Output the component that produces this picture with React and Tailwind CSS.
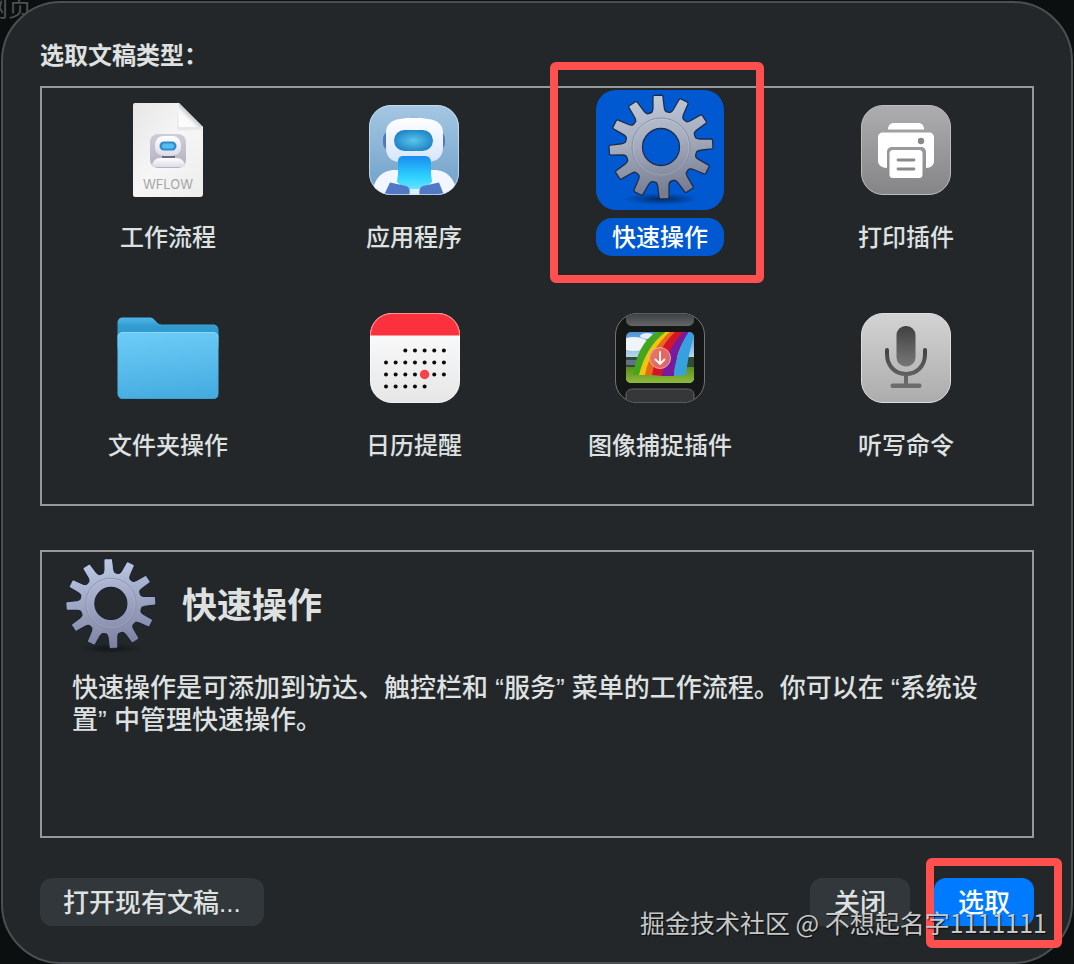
import { useState } from "react";

const TEETH = [0, 30, 60, 90, 120, 150, 180, 210, 240, 270, 300, 330];

function rad(deg) {
  return (deg * Math.PI) / 180;
}

function gearPath(cx, cy) {
  const point = (r, deg) =>
    `${(cx + r * Math.sin(rad(deg))).toFixed(2)} ${(cy - r * Math.cos(rad(deg))).toFixed(2)}`;

  const outline = TEETH.map((t, i) => {
    const a = t - 3.5;
    const start = `${i === 0 ? "M" : "L"}${point(36, a - 11)}`;
    return `${start} Q${point(37.5, a - 8.8)} ${point(39.5, a - 8.2)} L${point(50.5, a - 5.7)} Q${point(52, a - 5.4)} ${point(52, a - 4)} L${point(52, a + 4)} Q${point(52, a + 5.4)} ${point(50.5, a + 5.7)} L${point(39.5, a + 8.2)} Q${point(37.5, a + 8.8)} ${point(36, a + 11)} Q${point(35.2, a + 15)} ${point(36, a + 19)}`;
  }).join(" ");

  return `${outline} Z M${cx - 18.5} ${cy} a18.5 18.5 0 1 0 37 0 a18.5 18.5 0 1 0 -37 0 Z`;
}

const GEAR = gearPath(61, 57);

function GearIcon({ id, className, light }) {
  return (
    <svg viewBox="0 0 120 120" className={className} aria-hidden="true">
      <defs>
        <linearGradient id={id} x1="0" y1="0" x2="0.15" y2="1">
          <stop offset="0" stopColor={light ? "#c3cfea" : "#c4cddc"} />
          <stop offset="0.5" stopColor={light ? "#a0a9c6" : "#a5adbf"} />
          <stop offset="1" stopColor={light ? "#8084a2" : "#777c91"} />
        </linearGradient>
        <radialGradient id={`${id}-shadow`}>
          <stop offset="0" stopColor="#05080f" stopOpacity="0.55" />
          <stop offset="1" stopColor="#05080f" stopOpacity="0" />
        </radialGradient>
      </defs>
      <ellipse cx="61" cy="109" rx="38" ry="6" fill={`url(#${id}-shadow)`} />
      <path
        d={GEAR}
        fill={`url(#${id})`}
        fillRule="evenodd"
        stroke={light ? "#1b2436" : "#1d2c4c"}
        strokeWidth="1.3"
        strokeLinejoin="round"
      />
      <circle cx="61" cy="57" r="29" fill="none" stroke="#848da2" strokeWidth="0.9" />
      <circle cx="61" cy="57" r="28" fill="none" stroke="#ffffff" strokeOpacity="0.2" strokeWidth="0.8" />
    </svg>
  );
}

function WorkflowIcon() {
  return (
    <svg viewBox="0 0 128 120" className="h-full w-full" aria-hidden="true">
      <defs>
        <linearGradient id="paper" x1="0" y1="0" x2="1" y2="1">
          <stop offset="0" stopColor="#e6e6e6" />
          <stop offset="0.5" stopColor="#f6f6f6" />
          <stop offset="1" stopColor="#ededed" />
        </linearGradient>
        <linearGradient id="fold" x1="0" y1="1" x2="1" y2="0">
          <stop offset="0" stopColor="#ffffff" />
          <stop offset="0.35" stopColor="#fafafa" />
          <stop offset="0.52" stopColor="#c4c4c4" />
        </linearGradient>
        <linearGradient id="bust" x1="0" y1="0" x2="0" y2="1">
          <stop offset="0" stopColor="#c5c3d2" />
          <stop offset="1" stopColor="#a5a2b2" />
        </linearGradient>
        <linearGradient id="fade" x1="0" y1="0" x2="0" y2="1">
          <stop offset="0" stopColor="#ffffff" />
          <stop offset="1" stopColor="#dcdbe6" />
        </linearGradient>
      </defs>
      <path d="M31 13h44l24 24v67a3 3 0 0 1-3 3H31a2 2 0 0 1-2-2V15a2 2 0 0 1 2-2z" fill="url(#paper)" />
      <path d="M74 19l-1 19c0 2 1 2.500 3 2.500l22-1-1-4-22-2z" fill="#000000" opacity="0.05" />
      <path d="M75 13l24 24H77a2.500 2.500 0 0 1-2.500-2.500z" fill="url(#fold)" />
      <rect x="46" y="44" width="36" height="34" rx="8" fill="url(#bust)" opacity="0.8" />
      <rect x="58" y="62" width="13" height="8" fill="#6c6980" />
      <path d="M48 77c0-6 4-9 9-9h15c5 0 9 3 9 9z" fill="url(#fade)" />
      <rect x="51" y="46" width="26" height="20" rx="8.500" fill="url(#fade)" />
      <rect x="55.500" y="51.500" width="17" height="9" rx="4.500" fill="#2f8dc9" />
      <rect x="58" y="53.500" width="12" height="5" rx="2.500" fill="#57bdf0" />
      <text x="64" y="99" textAnchor="middle" fontSize="13" fill="#a5a5a5" className="font-['Inter']">
        WFLOW
      </text>
    </svg>
  );
}

function AppIcon() {
  return (
    <svg viewBox="0 0 128 120" className="h-full w-full" aria-hidden="true">
      <defs>
        <linearGradient id="sky" x1="0" y1="0" x2="0" y2="1">
          <stop offset="0" stopColor="#a4c7e3" />
          <stop offset="1" stopColor="#6f9fc8" />
        </linearGradient>
        <linearGradient id="head" x1="0" y1="0" x2="0" y2="1">
          <stop offset="0" stopColor="#ffffff" />
          <stop offset="1" stopColor="#d7e5fb" />
        </linearGradient>
        <linearGradient id="chest" x1="0" y1="0" x2="0" y2="1">
          <stop offset="0" stopColor="#1a8df0" />
          <stop offset="0.6" stopColor="#2ed3ff" />
          <stop offset="1" stopColor="#7be6ff" />
        </linearGradient>
        <radialGradient id="visor">
          <stop offset="0" stopColor="#5bc6ec" />
          <stop offset="1" stopColor="#2288c9" />
        </radialGradient>
        <clipPath id="app-clip">
          <rect x="19" y="15" width="90" height="90" rx="22" />
        </clipPath>
      </defs>
      <g clipPath="url(#app-clip)">
        <rect x="19" y="15" width="90" height="90" fill="url(#sky)" />
        <path d="M22 106c1-16 9-26 23-26h39c14 0 22 10 23 26z" fill="#f1f6ff" />
        <rect x="33" y="41" width="62" height="20" rx="8" fill="#4c77c5" />
        <ellipse cx="64" cy="31" rx="7" ry="4" fill="#4c77c5" />
        <path d="M50 29q14-3 28 0c10 1 15 6 15 14v15c0 9-7 14-15 14H50c-8 0-14-5-14-14V43c0-8 5-13 14-14z" fill="url(#head)" />
        <rect x="44" y="40" width="39" height="21" rx="10.500" fill="url(#visor)" />
        <path d="M53 66h22c4 0 6 3 6 6v11c0 4 1 6 1 9l-8 7-4 3H59l-4-3-8-7c0-3 1-5 1-9V72c0-3 1-6 5-6z" fill="url(#chest)" />
        <path d="M60 99h10v7H60z" fill="#d7efff" />
        <path d="M40 92.500l16 3.500c3 1 4 3 3.500 9H34z" fill="#5278c5" />
        <path d="M89 92.500l-16 3.500c-3 1-4 3-3.500 9H94z" fill="#5278c5" />
      </g>
      <rect x="19.500" y="15.500" width="89" height="89" rx="21.500" fill="none" stroke="#cfe1f2" strokeOpacity="0.75" />
    </svg>
  );
}

function PrinterIcon() {
  return (
    <svg viewBox="0 0 128 120" className="h-full w-full" aria-hidden="true">
      <defs>
        <linearGradient id="printer-bg" x1="0" y1="0" x2="0" y2="1">
          <stop offset="0" stopColor="#adadb0" />
          <stop offset="1" stopColor="#858588" />
        </linearGradient>
      </defs>
      <rect x="19.500" y="15.500" width="89" height="89" rx="21.500" fill="url(#printer-bg)" stroke="#bcbcbe" />
      <path d="M46 39.500c0-4 2-6.500 6-6.500h24c4 0 6 2.500 6 6.500z" fill="#fff" />
      <path d="M41 42.500h46c3 0 5 2 5 5V71c0 4-3 7-8 7V62c0-3-2-5-5-5H50c-3 0-5 2-5 5v16c-5 0-9-3-9-7V47.500c0-3 2-5 5-5z" fill="#fff" />
      <circle cx="79" cy="51" r="3.200" fill="#88888b" />
      <rect x="47.500" y="60" width="33" height="28" rx="3.500" fill="#fff" />
      <path d="M56 70h16M56 79h16" stroke="#8a8a8d" strokeWidth="2.800" strokeLinecap="round" />
    </svg>
  );
}

function FolderIcon() {
  return (
    <svg viewBox="0 0 128 120" className="h-full w-full" aria-hidden="true">
      <defs>
        <linearGradient id="folder-back" x1="0" y1="0" x2="0" y2="1">
          <stop offset="0" stopColor="#4eb6e8" />
          <stop offset="0.3" stopColor="#319bd0" />
        </linearGradient>
        <linearGradient id="folder-front" x1="0.400" y1="0" x2="0.550" y2="1">
          <stop offset="0" stopColor="#6ccbf6" />
          <stop offset="1" stopColor="#45ace0" />
        </linearGradient>
      </defs>
      <path d="M19 19.500h27c5 0 6 7 12 7h51c3 0 5.500 2 5.500 5V50H13.500V25c0-3.500 2-5.500 5.500-5.500z" fill="url(#folder-back)" />
      <rect x="13.500" y="34" width="101" height="67" rx="5.500" fill="url(#folder-front)" />
      <path d="M14 39c0-3 2-4.500 5-4.500h90c3 0 5 1.500 5 4.500" fill="none" stroke="#8bdafd" strokeWidth="0.900" />
      <path d="M15 98c1 2 2 2.500 4 2.500h90c2 0 4-.5 5-2.500" fill="none" stroke="#3c9dce" strokeWidth="0.900" />
    </svg>
  );
}

const CALENDAR_ROWS = [
  { y: 52.5, from: 2, to: 6 },
  { y: 64.5, from: 0, to: 6 },
  { y: 76.5, from: 0, to: 6 },
  { y: 88.5, from: 0, to: 4 },
];

function CalendarIcon() {
  return (
    <svg viewBox="0 0 128 120" className="h-full w-full" aria-hidden="true">
      <defs>
        <linearGradient id="cal-page" x1="0" y1="0" x2="0" y2="1">
          <stop offset="0" stopColor="#ffffff" />
          <stop offset="1" stopColor="#e6e6e6" />
        </linearGradient>
        <clipPath id="cal-clip">
          <rect x="20" y="15" width="90" height="90" rx="22" />
        </clipPath>
      </defs>
      <g clipPath="url(#cal-clip)">
        <rect x="20" y="15" width="90" height="90" fill="url(#cal-page)" />
        <rect x="20" y="15" width="90" height="22.500" fill="#fb323d" />
      </g>
      <rect x="20.500" y="15.500" width="89" height="89" rx="21.500" fill="none" stroke="#ffffff" strokeOpacity="0.45" />
      {CALENDAR_ROWS.map((row) =>
        [0, 1, 2, 3, 4, 5, 6]
          .filter((col) => col >= row.from && col <= row.to)
          .map((col) => (
            <circle key={`${row.y}-${col}`} cx={36 + col * 9.65} cy={row.y} r="2" fill="#0a0a0a" />
          ))
      )}
      <circle cx="74.600" cy="76.500" r="4.700" fill="#fa4249" />
    </svg>
  );
}

function ImageCaptureIcon() {
  return (
    <svg viewBox="0 0 128 120" className="h-full w-full" aria-hidden="true">
      <defs>
        <linearGradient id="scene-sky" x1="0" y1="0" x2="0" y2="1">
          <stop offset="0" stopColor="#4d93d2" />
          <stop offset="0.6" stopColor="#d5e5f1" />
        </linearGradient>
        <linearGradient id="grass" x1="0" y1="0" x2="0" y2="1">
          <stop offset="0" stopColor="#5c8f1e" />
          <stop offset="1" stopColor="#91bb3c" />
        </linearGradient>
        <linearGradient id="slot" x1="0" y1="0" x2="0" y2="1">
          <stop offset="0" stopColor="#3c3e3f" />
          <stop offset="1" stopColor="#636567" />
        </linearGradient>
        <clipPath id="scene-clip">
          <rect x="30" y="34" width="68" height="51" rx="5" />
        </clipPath>
        <clipPath id="capture-clip">
          <rect x="20" y="15.500" width="88" height="89" rx="21.500" />
        </clipPath>
      </defs>
      <rect x="19.500" y="15.500" width="89" height="89" rx="21.500" fill="#151616" stroke="#727476" />
      <g clipPath="url(#capture-clip)">
        <path d="M30 15h68v7c0 4-3 6-7 6H37c-4 0-7-2-7-6z" fill="url(#slot)" />
        <path d="M30 105V97c0-4 3-6 7-6h54c4 0 7 2 7 6v8z" fill="#353738" stroke="#66686a" />
      </g>
      <g clipPath="url(#scene-clip)">
        <rect x="30" y="34" width="68" height="51" fill="url(#scene-sky)" />
        <ellipse cx="38" cy="46" rx="14" ry="7" fill="#eef4f8" />
        <ellipse cx="51" cy="38" rx="7" ry="3" fill="#e3eef6" />
        <rect x="30" y="59" width="68" height="11" fill="#2f4d32" />
        <rect x="30" y="62" width="12" height="5" fill="#62708a" />
        <rect x="30" y="69" width="68" height="17" fill="url(#grass)" />
        <path d="M37 77C40 56 48 41 63 32h10C57 43 48 57 44 77z" fill="#44a51f" />
        <path d="M43 77C48 57 57 43 72 32h6C62 45 53 60 50 77z" fill="#edc611" />
        <path d="M49 77C52 60 61 45 76 32h6C68 45 60 60 57 77z" fill="#e96716" />
        <path d="M56 77C59 60 67 45 81 32h9C77 46 69 61 67 78z" fill="#d5142b" />
        <path d="M66 78C68 62 76 45 89 32h6C84 46 79 61 78 78z" fill="#751b9c" />
        <path d="M78 78C79 62 84 46 94 32l4 5C94 51 91 65 90 77z" fill="#37a1df" />
      </g>
      <circle cx="64" cy="60" r="10.500" fill="#e5766f" fillOpacity="0.85" stroke="#f2a7a0" />
      <path d="M64 54v11.500M59.500 61.500l4.500 4.500 4.500-4.500" fill="none" stroke="#fff1ec" strokeWidth="2" strokeLinecap="round" strokeLinejoin="round" />
    </svg>
  );
}

function MicIcon() {
  return (
    <svg viewBox="0 0 128 120" className="h-full w-full" aria-hidden="true">
      <defs>
        <linearGradient id="mic-bg" x1="0" y1="0" x2="0" y2="1">
          <stop offset="0" stopColor="#d3d3d3" />
          <stop offset="1" stopColor="#acacac" />
        </linearGradient>
        <linearGradient id="mic-body" x1="0" y1="0" x2="0" y2="1">
          <stop offset="0" stopColor="#414141" />
          <stop offset="1" stopColor="#777777" />
        </linearGradient>
        <linearGradient id="mic-arm" gradientUnits="userSpaceOnUse" x1="0" y1="50" x2="0" y2="90">
          <stop offset="0" stopColor="#414141" />
          <stop offset="1" stopColor="#707070" />
        </linearGradient>
      </defs>
      <rect x="19.500" y="15.500" width="89" height="89" rx="21.500" fill="url(#mic-bg)" stroke="#dedede" />
      <rect x="54.500" y="28" width="19" height="40.500" rx="9" fill="url(#mic-body)" />
      <path d="M45 52v4c0 12 8 20 19 20s19-8 19-20v-4M64 76v11" fill="none" stroke="url(#mic-arm)" strokeWidth="4" strokeLinecap="round" />
      <rect x="48.500" y="85.500" width="31" height="4.500" rx="2" fill="#6c6c6c" />
    </svg>
  );
}

const documentTypes = [
  { name: "工作流程", icon: <WorkflowIcon /> },
  { name: "应用程序", icon: <AppIcon /> },
  { name: "快速操作", icon: <GearIcon id="gear-tile" className="mx-auto h-full" />, marked: true },
  { name: "打印插件", icon: <PrinterIcon /> },
  { name: "文件夹操作", icon: <FolderIcon /> },
  { name: "日历提醒", icon: <CalendarIcon /> },
  { name: "图像捕捉插件", icon: <ImageCaptureIcon /> },
  { name: "听写命令", icon: <MicIcon /> },
];

function TypeItem({ type, selected, onSelect }) {
  return (
    <button
      type="button"
      aria-pressed={selected}
      onClick={onSelect}
      className="relative flex flex-col items-center gap-2 justify-self-center"
    >
      <span className={`block h-[120px] w-32 rounded-[20px] ${selected ? "bg-[#0059d1]" : ""}`}>
        {type.icon}
      </span>
      <span
        className={`h-[38px] rounded-2xl px-4 text-2xl leading-10 font-medium whitespace-nowrap ${
          selected ? "bg-[#0059d1] text-white" : "text-[#dfe1e1]"
        }`}
      >
        {type.name}
      </span>
      {type.marked && (
        <span className="pointer-events-none absolute -top-7 -right-10 -bottom-[27px] -left-[46px] rounded-md border-8 border-[#ff5050]"></span>
      )}
    </button>
  );
}

export default function App() {
  const [selected, setSelected] = useState("快速操作");

  return (
    <div className="relative isolate flex min-h-screen flex-col overflow-hidden bg-[#0c0f10] p-px font-['Liberation_Sans','Noto_Sans_CJK_SC',sans-serif]">
      <span className="absolute top-0 -left-4 -z-10 text-2xl leading-4 text-[#4d5152]">网页</span>

      <main className="flex flex-1 flex-col rounded-[60px] border-2 border-[#4b4f51] bg-[#23272a] px-[37px] pt-[37px] pb-9">
        <h1 className="text-2xl leading-8 font-bold text-[#dfe1e1]">选取文稿类型：</h1>

        <section className="mt-[14px] grid grid-cols-4 gap-y-[42px] border-2 border-[#969899] px-[3px] pt-[2px] pb-10">
          {documentTypes.map((type) => (
            <TypeItem
              key={type.name}
              type={type}
              selected={selected === type.name}
              onSelect={() => setSelected(type.name)}
            />
          ))}
        </section>

        {/* Description of the selected type */}
        <section className="mt-11 min-h-72 border-2 border-[#969899]">
          <div className="flex items-center gap-5 px-4 pt-[2px]">
            <GearIcon id="gear-detail" className="h-[104px] w-[104px]" light />
            <h2 className="text-[35px] leading-10 font-bold text-[#dfe1e1]">快速操作</h2>
          </div>
          <p className="mt-[14px] pr-10 pl-[30px] text-[26px] leading-8 font-medium text-[#dfe1e1]">
            快速操作是可添加到访达、触控栏和 “服务” 菜单的工作流程。你可以在 “系统设置” 中管理快速操作。
          </p>
        </section>

        <footer className="mt-10 flex items-center gap-6 text-[26px] leading-[50px] font-medium">
          <button type="button" className="mr-auto h-12 rounded-xl bg-[#31373a] px-[23px] text-[#dfe1e1]">
            打开现有文稿...
          </button>
          <button type="button" className="h-12 rounded-xl bg-[#31373a] px-6 text-[#dfe1e1]">
            关闭
          </button>
          <div className="relative h-12">
            <button type="button" className="h-12 rounded-xl bg-[#007aff] px-6 text-white">
              选取
            </button>
            <span className="pointer-events-none absolute -top-5 -right-7 -bottom-[22px] -left-2 rounded-md border-8 border-[#ff5050]"></span>
          </div>
        </footer>
      </main>

      <p className="pointer-events-none absolute right-[27px] bottom-[27px] text-[25px] leading-8 text-[#c6c8c8] text-shadow-[1px_1px_1px_rgb(0_0_0_/_0.7)] font-['Noto_Sans_CJK_SC',sans-serif]">
        掘金技术社区 @ 不想起名字1111111
      </p>
    </div>
  );
}
